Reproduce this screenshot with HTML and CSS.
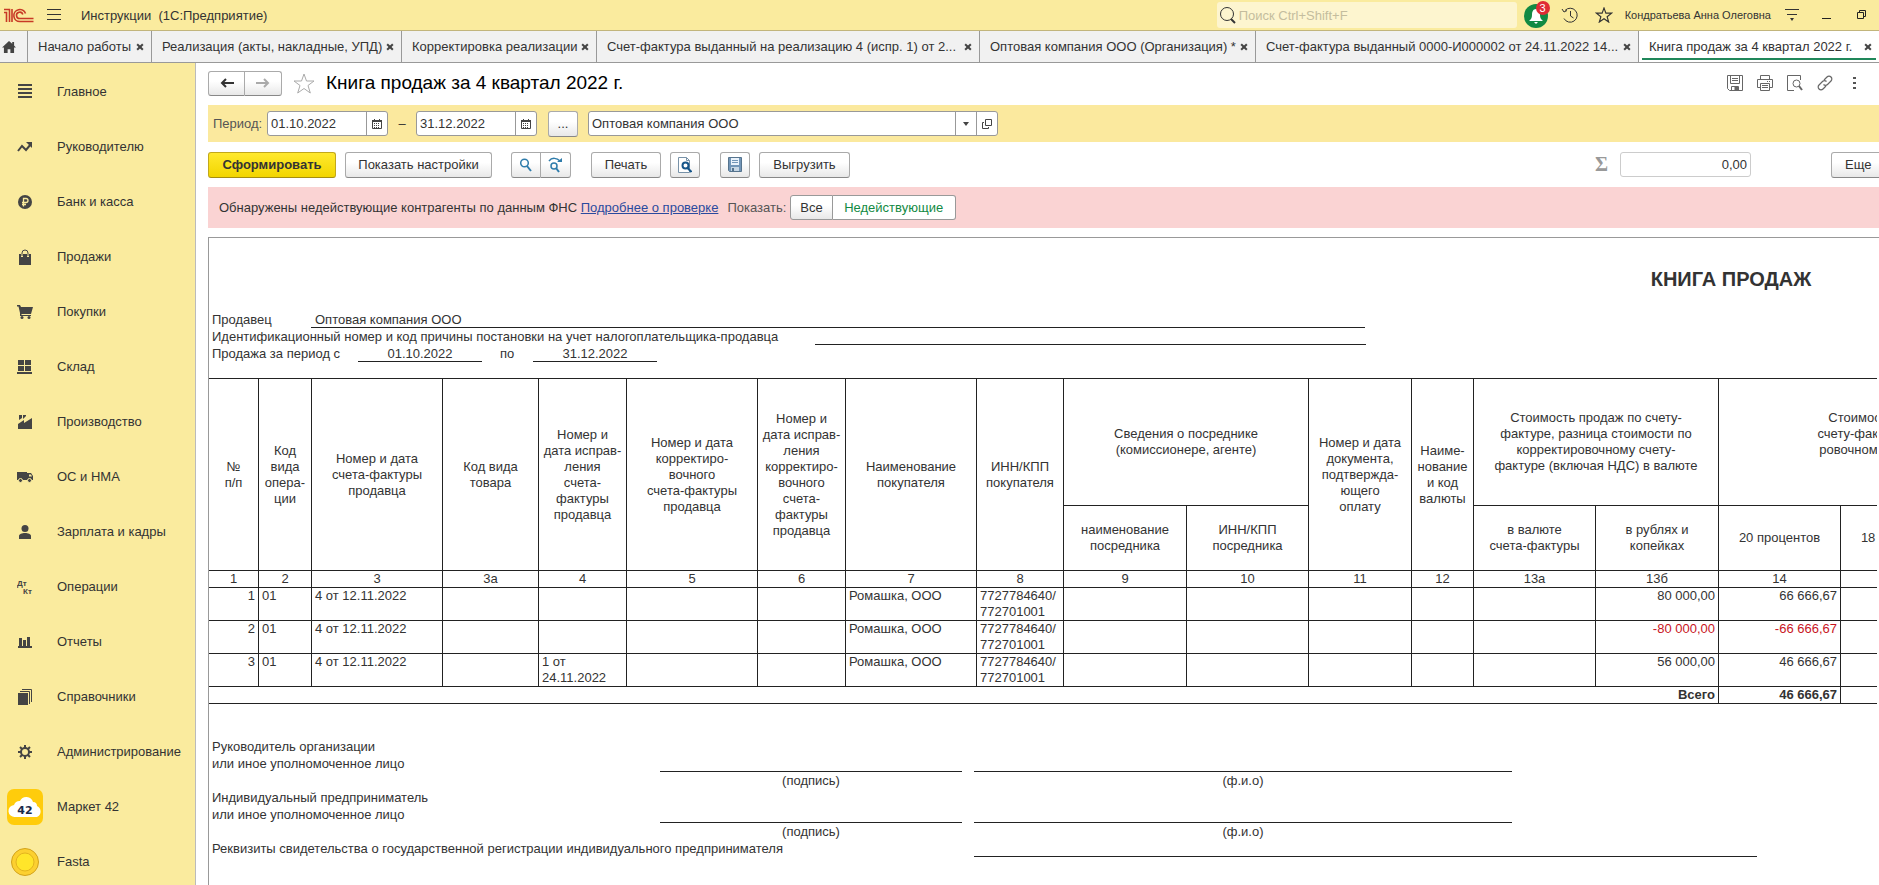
FILE: index.html
```html
<!DOCTYPE html>
<html lang="ru">
<head>
    <meta charset="UTF-8">
    <meta name="viewport" content="width=device-width, initial-scale=1.0">
    <title>Книга продаж за 4 квартал 2022 г.</title>
    <link rel="stylesheet" href="styles.css">
</head>
<body>
    <header class="topbar">
        <svg class="logo" width="30" height="15" viewBox="0 0 30 15" fill="none" stroke="#c83a26" stroke-width="1.600">
            <path d="M0 4.500h2.500V14M0 1.500h5.500V14M8 14V1"/>
            <path d="M21.500 5.500A6 6 0 1 0 16 13.500h13.500M18.800 6.500A3.200 3.200 0 1 0 16 10.500h13.500"/>
        </svg>
        <button class="icon-btn burger" aria-label="Меню">
            <svg width="14" height="12" viewBox="0 0 14 12" stroke="#333" stroke-width="1"><path d="M0 .500h14M0 5.500h14M0 10.500h14"/></svg>
        </button>
        <span class="app-title">Инструкции&nbsp; (1С:Предприятие)</span>
        <div class="search">
            <svg width="18" height="18" viewBox="0 0 18 18" fill="none" stroke="#333"><circle cx="8" cy="8" r="6.500"/><path d="M12 13l4 4" stroke-width="2"/></svg>
            <input type="text" placeholder="Поиск Ctrl+Shift+F" aria-label="Поиск">
        </div>
        <button class="icon-btn bell" aria-label="Уведомления">
            <svg width="26" height="30" viewBox="0 0 26 30">
                <circle cx="12" cy="16" r="12" fill="#128a43"/>
                <path d="M12 9c-3 0-4 3-4 6s-1 4-3 6h14c-2-2-3-3-3-6s-1-6-4-6zM10 22h4l-2 2z" fill="#fff"/>
            </svg>
            <span class="badge">3</span>
        </button>
        <button class="icon-btn history" aria-label="История">
            <svg width="18" height="18" viewBox="0 0 18 18" fill="none" stroke="#333"><path d="M4 4.500a7 7 0 1 1-1 8M1 3l2 3 3-1.500M9.500 5v5l3 2"/></svg>
        </button>
        <button class="icon-btn fav" aria-label="Избранное">
            <svg width="18" height="16" viewBox="0 0 18 17" fill="none" stroke="#333" stroke-width="1.200"><path d="M9 1l2 5.500h6l-4.700 3.800 1.700 5.700-5-3.500-5 3.500 1.700-5.700L1 6.500h6z"/></svg>
        </button>
        <span class="user">Кондратьева Анна Олеговна</span>
        <button class="icon-btn settings" aria-label="Настройки">
            <svg width="16" height="14" viewBox="0 0 16 14" stroke="#333"><path d="M1 1.500h14M3 6.500h10"/><path d="M6 10h4l-2 3z" fill="#333" stroke="none"/></svg>
        </button>
        <button class="icon-btn minimize" aria-label="Свернуть">
            <svg width="10" height="10" viewBox="0 0 10 10" stroke="#222"><path d="M0 8.500h9"/></svg>
        </button>
        <button class="icon-btn restore" aria-label="Восстановить">
            <svg width="10" height="10" viewBox="0 0 10 10" fill="none" stroke="#222"><path d="M.500 2.500h6v6h-6zM2.500 2V.500h6v6H7"/></svg>
        </button>
    </header>

    <nav class="tabs">
        <a class="tab home" href="#" aria-label="Начальная страница">
            <svg width="14" height="12" viewBox="0 0 15 13" fill="#444"><path d="M7.500 0L0 7h2v6h4V9h3v4h4V7h2l-2-2V1h-2v2z"/></svg>
        </a>
        <div class="tab tab-s"><a href="#">Начало работы</a><button class="close" aria-label="Закрыть"></button></div>
        <div class="tab tab-m"><a href="#">Реализация (акты, накладные, УПД)</a><button class="close" aria-label="Закрыть"></button></div>
        <div class="tab tab-r"><a href="#">Корректировка реализации</a><button class="close" aria-label="Закрыть"></button></div>
        <div class="tab tab-l"><a href="#">Счет-фактура выданный на реализацию 4 (испр. 1) от 2...</a><button class="close" aria-label="Закрыть"></button></div>
        <div class="tab tab-o"><a href="#">Оптовая компания ООО (Организация) *</a><button class="close" aria-label="Закрыть"></button></div>
        <div class="tab tab-l"><a href="#">Счет-фактура выданный 0000-И000002 от 24.11.2022 14...</a><button class="close" aria-label="Закрыть"></button></div>
        <div class="tab active"><a href="#">Книга продаж за 4 квартал 2022 г.</a><button class="close" aria-label="Закрыть"></button></div>
    </nav>

    <div class="workspace">
        <aside class="sidebar">
            <a href="#"><span class="ico"><svg width="14" height="15" viewBox="0 0 14 15" stroke="#444" stroke-width="2"><path d="M0 1h14M0 5h14M0 9h14M0 13h14"/></svg></span>Главное</a>
            <a href="#"><span class="ico"><svg width="16" height="12" viewBox="0 0 16 12" fill="none" stroke="#444" stroke-width="2"><path d="M1 10l4-5 4 4 5-6"/><path d="M9 1h6v6z" fill="#444" stroke="none"/></svg></span>Руководителю</a>
            <a href="#"><span class="ico"><svg width="14" height="14" viewBox="0 0 14 14"><circle cx="7" cy="7" r="7" fill="#444"/><path d="M5.500 11.500V3.500H8a2 2 0 0 1 0 4H4M4 9.500h4" fill="none" stroke="#faeb9e" stroke-width="1.300"/></svg></span>Банк и касса</a>
            <a href="#"><span class="ico"><svg width="14" height="16" viewBox="0 0 14 16"><path d="M1 5h12v11H1z" fill="#444"/><path d="M4 8V4a3 3 0 0 1 6 0v4" fill="none" stroke="#faeb9e" stroke-width="2"/><path d="M4 7V4a3 3 0 0 1 6 0v3" fill="none" stroke="#444" stroke-width="1"/></svg></span>Продажи</a>
            <a href="#"><span class="ico"><svg width="16" height="14" viewBox="0 0 16 14" fill="#444"><path d="M0 0h3l1 2h12l-2 7H4.500V10H14v1H3V8L1.500 1.500H0z"/><circle cx="5" cy="12.500" r="1.500"/><circle cx="12" cy="12.500" r="1.500"/></svg></span>Покупки</a>
            <a href="#"><span class="ico"><svg width="16" height="14" viewBox="0 0 16 14" fill="#444"><path d="M1 0h6v5H1zM8 0h6v5H8zM1 6h6v5H1zM8 6h6v5H8zM0 12h15v2H0z"/></svg></span>Склад</a>
            <a href="#"><span class="ico"><svg width="14" height="14" viewBox="0 0 14 14" fill="#444"><path d="M0 14V9l6-4v3l8-5v11zM1 0h3v3L1 5zM5 0h3v1L5 4z"/></svg></span>Производство</a>
            <a href="#"><span class="ico"><svg width="16" height="12" viewBox="0 0 16 12"><path d="M0 1h10v8H0zM10 2h4l2 3v4h-6z" fill="#444"/><path d="M12 3.500h2l1 2h-3z" fill="#faeb9e"/><circle cx="3.500" cy="9.500" r="2" fill="#444" stroke="#faeb9e"/><circle cx="12.500" cy="9.500" r="2" fill="#444" stroke="#faeb9e"/></svg></span>ОС и НМА</a>
            <a href="#"><span class="ico"><svg width="12" height="14" viewBox="0 0 12 14" fill="#444"><circle cx="6" cy="3.500" r="3.500"/><path d="M0 14v-3c0-2 3-3 6-3s6 1 6 3v3z"/></svg></span>Зарплата и кадры</a>
            <a href="#"><span class="ico"><svg width="16" height="18" viewBox="0 0 16 18" fill="#444" font-family="Liberation Sans, sans-serif" font-size="8" font-weight="bold"><text x="0" y="8">Дт</text><text x="6" y="16">Кт</text></svg></span>Операции</a>
            <a href="#"><span class="ico"><svg width="14" height="12" viewBox="0 0 14 12" fill="#444"><path d="M1 2h3v8h1V4h3v6h1V1h3v9h2v2H0v-2h1z"/></svg></span>Отчеты</a>
            <a href="#"><span class="ico"><svg width="14" height="16" viewBox="0 0 14 16"><path d="M0 4h10v12H0z" fill="#444"/><path d="M2 2.500h9.500V15M4 .500h9.500V13" fill="none" stroke="#444"/></svg></span>Справочники</a>
            <a href="#"><span class="ico"><svg width="14" height="14" viewBox="0 0 14 14" fill="none" stroke="#444"><circle cx="7" cy="7" r="4" stroke-width="2"/><path d="M7 0v3M7 11v3M0 7h3M11 7h3M2 2l2 2M10 10l2 2M12 2l-2 2M4 10l-2 2" stroke-width="2"/></svg></span>Администрирование</a>
            <a href="#"><span class="ico"><svg width="36" height="36" viewBox="0 0 36 36"><rect width="36" height="36" rx="7" fill="#ffcc0c"/><path d="M8 28a6 6 0 0 1-1-12 6 6 0 0 1 6-4 7 7 0 0 1 13 1c3 0 4 2 4 4a6 6 0 0 1 0 11z" fill="#fff"/><text x="18" y="25" text-anchor="middle" font-family="DejaVu Sans, sans-serif" font-size="11" font-weight="bold" fill="#1b2a4a">42</text></svg></span>Маркет 42</a>
            <a href="#"><span class="ico"><svg width="28" height="28" viewBox="0 0 28 28"><circle cx="14" cy="14" r="13.500" fill="#fcd030" stroke="#d2a21c"/><circle cx="14" cy="14" r="9" fill="#ffe52a" stroke="#e3b41e"/></svg></span>Fasta</a>
        </aside>

        <main class="content">
            <div class="title-row">
                <div class="group nav-group">
                    <button class="btn" aria-label="Назад"><svg width="14" height="12" viewBox="0 0 14 12" fill="none" stroke="#333" stroke-width="2"><path d="M14 6H2M6 2L2 6l4 4"/></svg></button>
                    <button class="btn" aria-label="Вперед"><svg width="14" height="12" viewBox="0 0 14 12" fill="none" stroke="#aaa" stroke-width="2"><path d="M0 6h12M8 2l4 4-4 4"/></svg></button>
                </div>
                <button class="icon-btn page-star" aria-label="В избранное">
                    <svg width="22" height="21" viewBox="0 0 22 21" fill="none" stroke="#aaa"><path d="M11 1l2.500 7H21l-6 4.500 2.300 7.500L11 15.500 4.700 20 7 12.500 1 8h7.500z"/></svg>
                </button>
                <h1>Книга продаж за 4 квартал 2022 г.</h1>
                <div class="page-tools">
                    <button class="icon-btn" aria-label="Сохранить"><svg width="16" height="16" viewBox="0 0 16 16" fill="none" stroke="#666"><path d="M.500.500h15v15h-13l-2-2zM3.500.500v8h9v-8M5 3.500h6M5 5.500h6M4.500 15.500v-4h7v4"/><path d="M8 12h3v3H8z" fill="#666"/></svg></button>
                    <button class="icon-btn" aria-label="Печать"><svg width="16" height="16" viewBox="0 0 16 16" fill="none" stroke="#666"><path d="M3.500 4V.500h9V4M3 12.500H.500v-8h15v8H13M3.500 8.500h9v7h-9zM5 10.500h6M5 12.500h6M10 6.500h1M12 6.500h1"/></svg></button>
                    <button class="icon-btn" aria-label="Просмотр"><svg width="16" height="16" viewBox="0 0 16 16" fill="none" stroke="#666"><path d="M13.500 5V.500H.500v15H7"/><circle cx="9.500" cy="8.500" r="3.500"/><path d="M12 11l3 4" stroke-width="2"/></svg></button>
                    <button class="icon-btn" aria-label="Ссылка"><svg width="16" height="16" viewBox="0 0 16 16" fill="none" stroke="#666" stroke-width="1.200"><path d="M7 5l3-3a2.800 2.800 0 0 1 4 4l-3.500 3.500a2.800 2.800 0 0 1-4 0M9 11l-3 3a2.800 2.800 0 0 1-4-4l3.500-3.500a2.800 2.800 0 0 1 4 0"/></svg></button>
                    <button class="icon-btn" aria-label="Еще"><svg width="16" height="14" viewBox="0 0 16 14" fill="#555"><path d="M6 1h3v2H6zM6 6h3v2H6zM6 11h3v2H6z"/></svg></button>
                </div>
            </div>

            <form class="filter">
                <label for="from">Период:</label>
                <div class="field date">
                    <input type="text" id="from" value="01.10.2022">
                    <button type="button" aria-label="Календарь"><svg width="10" height="10" viewBox="0 0 10 10"><path d="M.500 1.500h9v8h-9z" fill="none" stroke="#444"/><path d="M0 1h10v2H0zM2 0h1v2H2zM7 0h1v2H7z" fill="#444"/><path d="M2 4.500h6M2 6.500h6M2 8.500h6" stroke="#444" stroke-dasharray="1 1"/></svg></button>
                </div>
                <span class="dash">–</span>
                <div class="field date">
                    <input type="text" id="to" value="31.12.2022" aria-label="Конец периода">
                    <button type="button" aria-label="Календарь"><svg width="10" height="10" viewBox="0 0 10 10"><path d="M.500 1.500h9v8h-9z" fill="none" stroke="#444"/><path d="M0 1h10v2H0zM2 0h1v2H2zM7 0h1v2H7z" fill="#444"/><path d="M2 4.500h6M2 6.500h6M2 8.500h6" stroke="#444" stroke-dasharray="1 1"/></svg></button>
                </div>
                <button type="button" class="btn square dots">...</button>
                <div class="field org">
                    <input type="text" value="Оптовая компания ООО" aria-label="Организация">
                    <button type="button" aria-label="Выбрать"><svg width="6" height="4" viewBox="0 0 6 4" fill="#444"><path d="M0 0h6L3 4z"/></svg></button>
                    <button type="button" aria-label="Открыть"><svg width="10" height="10" viewBox="0 0 10 10" fill="none" stroke="#444"><path d="M3.500.500h6v6h-6zM2 3.500H.500v6h6V8"/></svg></button>
                </div>
            </form>

            <div class="toolbar">
                <button class="btn primary">Сформировать</button>
                <button class="btn show-settings">Показать настройки</button>
                <div class="group search-group">
                    <button class="btn" aria-label="Найти"><svg width="14" height="14" viewBox="0 0 14 14" fill="none" stroke="#2f7cab" stroke-width="2"><circle cx="5.500" cy="5" r="3.800" stroke-width="1.500"/><path d="M8 8l4 5"/></svg></button>
                    <button class="btn" aria-label="Найти далее"><svg width="16" height="16" viewBox="0 0 16 16" fill="none" stroke="#2f7cab" stroke-width="2"><path d="M1 4c3-4 8-3 11 0" stroke-width="1.500"/><path d="M9 5h5V1z" fill="#2f7cab" stroke="none"/><circle cx="6" cy="9" r="3" stroke-width="1.500"/><path d="M8 11l3 4"/></svg></button>
                </div>
                <button class="btn print">Печать</button>
                <button class="btn square preview" aria-label="Просмотр"><svg width="14" height="16" viewBox="0 0 14 16" fill="none"><path d="M.500.500h8l3 3v12H.500z" fill="#fff" stroke="#7892a8"/><path d="M8.500.500v3h3" stroke="#7892a8"/><circle cx="7.500" cy="8.500" r="3" stroke="#16568a" stroke-width="2"/><path d="M9.500 11l4 4" stroke="#16568a" stroke-width="2"/></svg></button>
                <button class="btn square save" aria-label="Сохранить"><svg width="14" height="15" viewBox="0 0 14 15"><path d="M.500.500h13v14h-12l-1-1z" fill="#7296b8" stroke="#56748e"/><path d="M3 1h8v7H3z" fill="#e9f2fb"/><path d="M4 3.500h6M4 5.500h6" stroke="#7296b8"/><path d="M3 10h8v4H3z" fill="#c6d6e4"/><path d="M4 11h2v3H4z" fill="#56748e"/></svg></button>
                <button class="btn export">Выгрузить</button>
                <span class="sigma">Σ</span>
                <input type="text" class="sum" value="0,00" aria-label="Сумма">
                <div class="more-wrap"><button class="btn more">Еще</button></div>
            </div>

            <div class="alert">
                <span>Обнаружены недействующие контрагенты по данным ФНС <a href="#">Подробнее о проверке</a></span>
                <span class="show-label">Показать:</span>
                <div class="group toggle">
                    <button class="btn">Все</button>
                    <button class="btn on">Недействующие</button>
                </div>
            </div>

            <div class="frame">
                <div class="viewport">
                    <div class="sheet">
                        <h2>КНИГА ПРОДАЖ</h2>
                        <div class="line seller"><span>Продавец</span><span class="fill">Оптовая компания ООО</span></div>
                        <div class="line inn"><span>Идентификационный номер и код причины постановки на учет налогоплательщика-продавца</span><span class="fill"></span></div>
                        <div class="line period"><span>Продажа за период с</span><span class="fill">01.10.2022</span><span class="to">по</span><span class="fill">31.12.2022</span></div>

                        <table class="book">
                            <colgroup>
                                <col class="w50"><col class="w53"><col class="w131"><col class="w96"><col class="w88"><col class="w131"><col class="w88"><col class="w131">
                                <col class="w87"><col class="w123"><col class="w122"><col class="w103"><col class="w62"><col class="w122"><col class="w123"><col class="w122">
                                <col class="w122"><col class="w122"><col class="w122"><col>
                            </colgroup>
                            <thead>
                                <tr class="head-top">
                                    <th rowspan="2">№<br>п/п</th>
                                    <th rowspan="2">Код<br>вида<br>опера-<br>ции</th>
                                    <th rowspan="2">Номер и дата<br>счета-фактуры<br>продавца</th>
                                    <th rowspan="2">Код вида<br>товара</th>
                                    <th rowspan="2">Номер и<br>дата исправ-<br>ления<br>счета-<br>фактуры<br>продавца</th>
                                    <th rowspan="2">Номер и дата<br>корректиро-<br>вочного<br>счета-фактуры<br>продавца</th>
                                    <th rowspan="2">Номер и<br>дата исправ-<br>ления<br>корректиро-<br>вочного<br>счета-<br>фактуры<br>продавца</th>
                                    <th rowspan="2">Наименование<br>покупателя</th>
                                    <th rowspan="2">ИНН/КПП<br>покупателя</th>
                                    <th colspan="2">Сведения о посреднике<br>(комиссионере, агенте)</th>
                                    <th rowspan="2">Номер и дата<br>документа,<br>подтвержда-<br>ющего<br>оплату</th>
                                    <th rowspan="2">Наиме-<br>нование<br>и код<br>валюты</th>
                                    <th colspan="2">Стоимость продаж по счету-<br>фактуре, разница стоимости по<br>корректировочному счету-<br>фактуре (включая НДС) в валюте</th>
                                    <th colspan="4">Стоимость продаж, облагаемых налогом, по<br>счету-фактуре, разница стоимости по коррек­ти-<br>ровочному счету-фактуре (без НДС) в рублях и<br>копейках, по ставке</th>
                                    <th rowspan="2"></th>
                                </tr>
                                <tr class="head-sub">
                                    <th>наименование<br>посредника</th>
                                    <th>ИНН/КПП<br>посредника</th>
                                    <th>в валюте<br>счета-фактуры</th>
                                    <th>в рублях и<br>копейках</th>
                                    <th>20 процентов</th>
                                    <th>18 процентов</th>
                                    <th>10 процентов</th>
                                    <th>0 процентов</th>
                                </tr>
                                <tr>
                                    <th>1</th><th>2</th><th>3</th><th>3а</th><th>4</th><th>5</th><th>6</th><th>7</th><th>8</th><th>9</th><th>10</th>
                                    <th>11</th><th>12</th><th>13а</th><th>13б</th><th>14</th><th>14а</th><th>15</th><th>16</th><th></th>
                                </tr>
                            </thead>
                            <tbody>
                                <tr>
                                    <td class="num">1</td><td>01</td><td>4 от 12.11.2022</td><td></td><td></td><td></td><td></td><td>Ромашка, ООО</td><td>7727784640/<br>772701001</td><td></td><td></td>
                                    <td></td><td></td><td></td><td class="num">80 000,00</td><td class="num">66 666,67</td><td></td><td></td><td></td><td></td>
                                </tr>
                                <tr>
                                    <td class="num">2</td><td>01</td><td>4 от 12.11.2022</td><td></td><td></td><td></td><td></td><td>Ромашка, ООО</td><td>7727784640/<br>772701001</td><td></td><td></td>
                                    <td></td><td></td><td></td><td class="num neg">-80 000,00</td><td class="num neg">-66 666,67</td><td></td><td></td><td></td><td></td>
                                </tr>
                                <tr>
                                    <td class="num">3</td><td>01</td><td>4 от 12.11.2022</td><td></td><td>1 от<br>24.11.2022</td><td></td><td></td><td>Ромашка, ООО</td><td>7727784640/<br>772701001</td><td></td><td></td>
                                    <td></td><td></td><td></td><td class="num">56 000,00</td><td class="num">46 666,67</td><td></td><td></td><td></td><td></td>
                                </tr>
                            </tbody>
                            <tfoot>
                                <tr><td class="num" colspan="15">Всего</td><td class="num">46 666,67</td><td></td><td></td><td></td><td></td></tr>
                            </tfoot>
                        </table>

                        <div class="sign">
                            <div class="who">Руководитель организации<br>или иное уполномоченное лицо</div>
                            <div class="rule"></div>
                            <div class="rule"></div>
                            <div class="hint">(подпись)</div>
                            <div class="hint">(ф.и.о)</div>
                        </div>
                        <div class="sign">
                            <div class="who">Индивидуальный предприниматель<br>или иное уполномоченное лицо</div>
                            <div class="rule"></div>
                            <div class="rule"></div>
                            <div class="hint">(подпись)</div>
                            <div class="hint">(ф.и.о)</div>
                        </div>
                        <div class="line reg"><span>Реквизиты свидетельства о государственной регистрации индивидуального предпринимателя</span><span class="fill"></span></div>
                    </div>
                </div>
            </div>
        </main>
    </div>
</body>
</html>
```
FILE: styles.css
```css
* {
    box-sizing: border-box;
}
body {
    margin: 0;
    height: 100vh;
    display: flex;
    flex-direction: column;
    overflow: hidden;
    font-family: "Liberation Sans", Arial, sans-serif;
    font-size: 13px;
    color: #333;
    background: #fff;
}
button, input {
    font: inherit;
    color: inherit;
}
button {
    cursor: pointer;
}
svg {
    display: block;
    flex: none;
}
.icon-btn {
    display: flex;
    align-items: center;
    justify-content: center;
    flex: none;
    padding: 0;
    border: none;
    background: none;
}

/* top bar */
.topbar {
    display: flex;
    align-items: center;
    flex: none;
    height: 31px;
    padding: 0 12px 0 4px;
    background: #faeb9e;
    border-bottom: 1px solid #c2b57c;
}
.burger {
    margin: 0 20px 0 13px;
}
.search {
    display: flex;
    align-items: center;
    width: 300px;
    height: 26px;
    margin-left: auto;
    padding-left: 2px;
    background: #fdf5cf;
    border-radius: 3px;
}
.search input {
    flex: 1;
    min-width: 0;
    padding: 0 2px;
    border: none;
    background: none;
}
.search input::placeholder {
    color: #c4bd9e;
    opacity: 1;
}
.bell {
    position: relative;
    margin-left: 7px;
}
.badge {
    position: absolute;
    top: 1px;
    left: 12px;
    width: 14px;
    height: 14px;
    border-radius: 50%;
    background: #e02b34;
    color: #fff;
    font-size: 11px;
    line-height: 14px;
    text-align: center;
}
.history {
    margin-left: 11px;
}
.fav {
    margin-left: 16px;
}
.user {
    margin: 0 13px 0 12px;
    font-size: 11px;
    white-space: nowrap;
}
.minimize {
    margin: 0 25px 0 22px;
}

/* window tabs */
.tabs {
    display: flex;
    flex: none;
    height: 32px;
    background: #f1f1f1;
    border-bottom: 1px solid #999;
}
.tab {
    display: flex;
    align-items: center;
    flex: none;
    padding: 0 7px 0 10px;
    border-right: 1px solid #999;
}
.tab a {
    flex: 1;
    color: #333;
    text-decoration: none;
    white-space: nowrap;
    overflow: hidden;
}
.tab.home {
    width: 28px;
    padding: 0 0 0 2px;
}
.tab-s {
    width: 124px;
}
.tab-m {
    width: 250px;
}
.tab-r {
    width: 195px;
}
.tab-l {
    width: 383px;
}
.tab-o {
    width: 276px;
}
.tab.active {
    position: relative;
    flex: 1;
    background: #fff;
    border-right: none;
}
.tab.active::after {
    content: "";
    position: absolute;
    left: 3px;
    right: 3px;
    bottom: 2px;
    height: 2px;
    background: #20875a;
}
.close {
    position: relative;
    flex: none;
    width: 8px;
    height: 8px;
    padding: 0;
    border: none;
    background: none;
}
.close::before,
.close::after {
    content: "";
    position: absolute;
    top: 3px;
    left: 0;
    width: 8px;
    height: 2px;
    background: #444;
    transform: rotate(45deg);
}
.close::after {
    transform: rotate(-45deg);
}

/* section panel */
.workspace {
    display: flex;
    flex: 1;
    min-height: 0;
}
.sidebar {
    flex: none;
    width: 196px;
    padding-top: 1px;
    background: #faeb9e;
    border-right: 1px solid #bbb;
    overflow: hidden;
}
.sidebar a {
    display: flex;
    align-items: center;
    height: 55px;
    color: #333;
    text-decoration: none;
}
.ico {
    display: flex;
    justify-content: center;
    width: 50px;
    margin-right: 7px;
}

.content {
    flex: 1;
    min-width: 0;
    display: flex;
    flex-direction: column;
    padding-left: 12px;
}
.btn {
    display: flex;
    align-items: center;
    justify-content: center;
    flex: none;
    height: 26px;
    padding: 0 13px;
    border: 1px solid #aaa;
    border-bottom-color: #888;
    border-radius: 3px;
    background: linear-gradient(#fff 40%, #e8e8e8);
    white-space: nowrap;
}
.square {
    width: 30px;
    padding: 0;
}
.group {
    display: flex;
    flex: none;
}
.group .btn:first-child {
    border-radius: 3px 0 0 3px;
}
.group .btn:last-child {
    border-left: none;
    border-radius: 0 3px 3px 0;
}

/* form header */
.title-row {
    display: flex;
    align-items: center;
    flex: none;
    height: 42px;
    padding: 0 16px 2px 0;
}
.nav-group .btn {
    width: 37px;
    height: 25px;
    padding: 0;
}
.page-star {
    margin: 0 11px;
}
h1 {
    margin: 0;
    font-size: 19px;
    font-weight: normal;
    color: #000;
    white-space: nowrap;
}
.page-tools {
    display: flex;
    gap: 14px;
    margin-left: auto;
}

/* period and organization */
.filter {
    display: flex;
    align-items: center;
    flex: none;
    height: 37px;
    padding-left: 5px;
    background: #fbe99e;
}
.filter label {
    width: 54px;
    color: #555;
}
.field {
    display: flex;
    height: 25px;
    background: #fff;
    border: 1px solid #999;
    border-radius: 3px;
}
.field input {
    flex: 1;
    min-width: 0;
    padding: 0 3px;
    border: none;
    background: none;
}
.field button {
    display: flex;
    align-items: center;
    justify-content: center;
    width: 21px;
    padding: 0;
    border: none;
    border-left: 1px solid #999;
    background: none;
}
.date {
    width: 121px;
}
.dash {
    width: 28px;
    text-align: center;
}
.dots {
    margin: 0 10px 0 11px;
}
.org {
    width: 410px;
}

/* commands */
.toolbar {
    display: flex;
    align-items: center;
    flex: none;
    height: 45px;
}
.primary {
    width: 128px;
    padding: 0;
    border-color: #c2a81a;
    border-bottom-color: #a48d10;
    background: linear-gradient(#ffe92e, #f2d500);
    font-weight: bold;
}
.show-settings {
    width: 147px;
    margin-left: 9px;
}
.search-group {
    margin: 0 20px 0 19px;
}
.search-group .btn {
    width: 30px;
    padding: 0;
}
.print {
    width: 70px;
}
.preview {
    margin: 0 20px 0 9px;
}
.export {
    width: 91px;
    margin-left: 9px;
}
.sigma {
    margin-left: auto;
    margin-right: 12px;
    color: #999;
    font-family: "Liberation Serif", serif;
    font-size: 20px;
    font-weight: bold;
}
.sum {
    width: 131px;
    height: 25px;
    margin-right: 80px;
    padding: 0 3px;
    border: 1px solid #ccc;
    border-radius: 3px;
    text-align: right;
}
.more-wrap {
    flex: none;
    width: 48px;
    overflow: hidden;
}
.more {
    width: 70px;
    justify-content: flex-start;
}

/* counterparty warning */
.alert {
    display: flex;
    align-items: center;
    flex: none;
    height: 41px;
    padding-left: 11px;
    background: #fad3d3;
    white-space: nowrap;
}
.alert a {
    color: #2b4a9e;
}
.show-label {
    margin: 0 4px 0 9px;
    color: #555;
}
.toggle .btn {
    height: 25px;
    padding: 0 9px;
    border-color: #999;
}
.toggle .btn.on {
    width: 123px;
    background: #fff;
    color: #128a43;
}

/* spreadsheet */
.frame {
    flex: 1;
    min-height: 0;
    margin-top: 9px;
    padding-right: 2px;
    border-top: 1px solid #999;
    border-left: 1px solid #999;
}
.viewport {
    height: 100%;
    overflow: hidden;
}
.sheet {
    width: 3044px;
    padding-top: 29px;
    line-height: 16px;
}
h2 {
    margin: 0 0 20px;
    font-size: 20px;
    line-height: 24px;
    text-align: center;
}
.line {
    display: flex;
    height: 17px;
    padding-left: 3px;
}
.line span {
    line-height: 18px;
}
.fill {
    border-bottom: 1px solid #222;
}
.seller span:first-child {
    width: 99px;
}
.seller .fill {
    width: 1054px;
    padding-left: 4px;
}
.inn span:first-child {
    width: 603px;
}
.inn .fill {
    width: 551px;
}
.period span:first-child {
    width: 146px;
}
.period .fill {
    width: 124px;
    text-align: center;
}
.period .to {
    width: 51px;
    padding-left: 18px;
}

.book {
    width: 100%;
    margin: 16px 0 34px;
    table-layout: fixed;
    border-spacing: 0;
    border-top: 1px solid #222;
}
.book th,
.book td {
    height: 17px;
    padding: 0 3px;
    border-right: 1px solid #222;
    border-bottom: 1px solid #222;
    white-space: nowrap;
}
.book th {
    padding: 0;
    font-weight: normal;
    text-align: center;
}
.book td {
    vertical-align: top;
}
.book .head-top th {
    height: 127px;
}
.book .head-sub th {
    height: 65px;
}
.book .num {
    text-align: right;
}
.book .neg {
    color: #c8141e;
}
.book tfoot td {
    font-weight: bold;
}
.w50 { width: 50px; }
.w53 { width: 53px; }
.w62 { width: 62px; }
.w87 { width: 87px; }
.w88 { width: 88px; }
.w96 { width: 96px; }
.w103 { width: 103px; }
.w122 { width: 122px; }
.w123 { width: 123px; }
.w131 { width: 131px; }

/* signatures */
.sign {
    display: grid;
    grid-template-columns: 436px 302px 538px;
    grid-template-rows: 34px 17px;
    column-gap: 12px;
    padding-left: 3px;
    line-height: 17px;
}
.rule {
    border-bottom: 1px solid #222;
}
.hint {
    text-align: center;
}
.hint:nth-child(4) {
    grid-column: 2;
}
.reg span:first-child {
    width: 762px;
}
.reg .fill {
    width: 783px;
}
```
